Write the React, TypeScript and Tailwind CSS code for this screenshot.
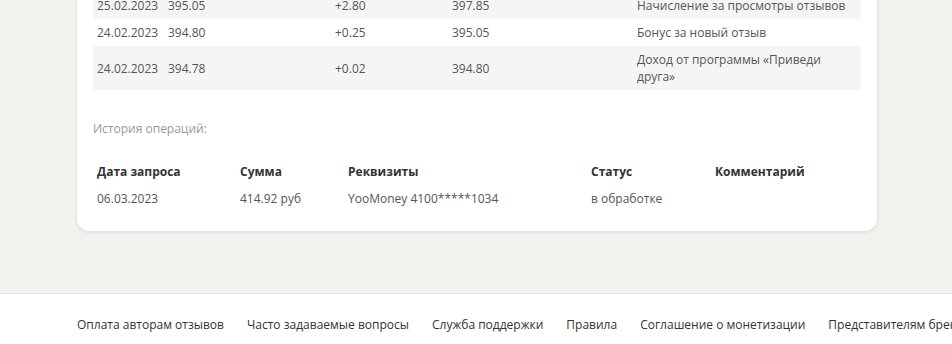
import React from 'react';

interface BalanceRow {
    date: string;
    before: string;
    change: string;
    after: string;
    note: string;
}

const balanceRows: BalanceRow[] = [
    { date: '25.02.2023', before: '395.05', change: '+2.80', after: '397.85', note: 'Начисление за просмотры отзывов' },
    { date: '24.02.2023', before: '394.80', change: '+0.25', after: '395.05', note: 'Бонус за новый отзыв' },
    { date: '24.02.2023', before: '394.78', change: '+0.02', after: '394.80', note: 'Доход от программы «Приведи друга»' },
];

const footerLinks = [
    'Оплата авторам отзывов',
    'Часто задаваемые вопросы',
    'Служба поддержки',
    'Правила',
    'Соглашение о монетизации',
    'Представителям брендов',
];

export default function App() {
    return (
        <div
            className="min-h-[344px] bg-[#f3f2ee] text-[12px] text-[#555]"
            style={{ fontFamily: '"Open Sans", "Liberation Sans", sans-serif' }}
        >
            <div className="mx-[77px] w-[800px] overflow-hidden rounded-b-[12px] bg-white px-4 pb-[19px] shadow-[0_1px_4px_rgba(0,0,0,0.12)]">
                {/* balance log, scrolled so the first row is cut */}
                <table className="-mt-[8px] w-[768px] table-fixed border-collapse">
                    <colgroup>
                        <col className="w-[71px]" />
                        <col className="w-[167px]" />
                        <col className="w-[117px]" />
                        <col className="w-[185px]" />
                        <col className="w-[228px]" />
                    </colgroup>
                    <tbody>
                        {balanceRows.map((row, i) => (
                            <tr key={i} className={i % 2 === 0 ? 'bg-[#f5f5f5]' : 'bg-white'}>
                                <td className="px-1 py-[5px] leading-[17px] align-middle">{row.date}</td>
                                <td className="px-1 py-[5px] leading-[17px] align-middle">{row.before}</td>
                                <td className="px-1 py-[5px] leading-[17px] align-middle">{row.change}</td>
                                <td className="px-1 py-[5px] leading-[17px] align-middle">{row.after}</td>
                                <td className="px-1 py-[5px] leading-[17px] align-middle">{row.note}</td>
                            </tr>
                        ))}
                    </tbody>
                </table>

                <div className="mt-[30px] leading-[18px] text-[#999]">История операций:</div>

                <table className="mt-[20px] w-[768px] table-fixed border-collapse">
                    <colgroup>
                        <col className="w-[143px]" />
                        <col className="w-[108px]" />
                        <col className="w-[243px]" />
                        <col className="w-[124px]" />
                        <col className="w-[150px]" />
                    </colgroup>
                    <thead>
                        <tr className="text-left font-bold text-[#333]">
                            <th className="px-1 py-[5px] leading-[17px]">Дата запроса</th>
                            <th className="px-1 py-[5px] leading-[17px]">Сумма</th>
                            <th className="px-1 py-[5px] leading-[17px]">Реквизиты</th>
                            <th className="px-1 py-[5px] leading-[17px]">Статус</th>
                            <th className="px-1 py-[5px] leading-[17px]">Комментарий</th>
                        </tr>
                    </thead>
                    <tbody>
                        <tr>
                            <td className="px-1 py-[5px] leading-[17px]">06.03.2023</td>
                            <td className="px-1 py-[5px] leading-[17px]">414.92 руб</td>
                            <td className="px-1 py-[5px] leading-[17px]">YooMoney 4100*****1034</td>
                            <td className="px-1 py-[5px] leading-[17px]">в обработке</td>
                            <td className="px-1 py-[5px] leading-[17px]"></td>
                        </tr>
                    </tbody>
                </table>
            </div>

            <footer className="mt-[62px] border-t border-[#e6e5e1] bg-white">
                <nav className="flex gap-[23px] whitespace-nowrap overflow-hidden pl-[77px] pt-[22px] pb-[22px] leading-[18px] text-[#333]">
                    {footerLinks.map((link) => (
                        <a key={link} href="#" className="shrink-0">
                            {link}
                        </a>
                    ))}
                </nav>
            </footer>
        </div>
    );
}
